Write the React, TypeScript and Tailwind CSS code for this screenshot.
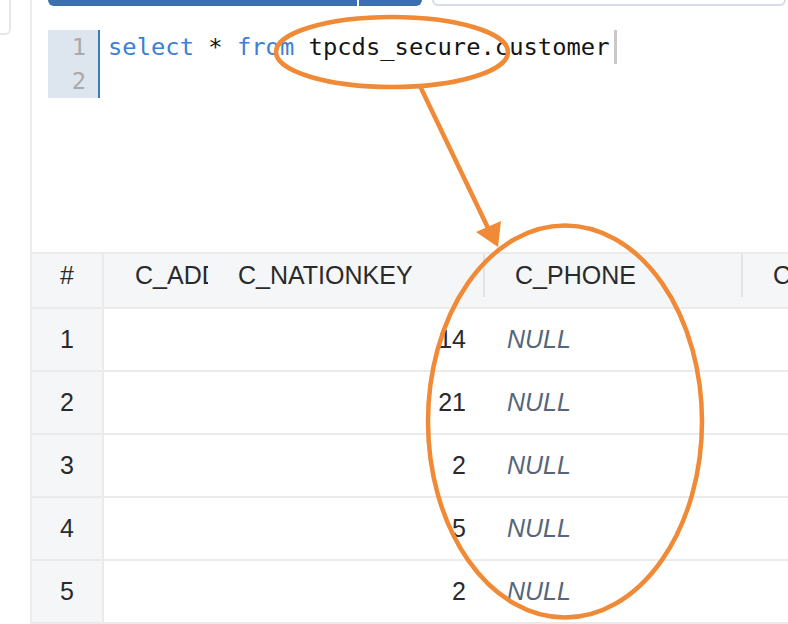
import React from "react";

const rows = [
  { n: 1, key: "14" },
  { n: 2, key: "21" },
  { n: 3, key: "2" },
  { n: 4, key: "5" },
  { n: 5, key: "2" },
];

const Annotations = () => (
  <svg
    className="absolute inset-0 pointer-events-none"
    width={788}
    height={624}
    viewBox="0 0 788 624"
  >
    <ellipse cx={392} cy={52} rx={116} ry={35} fill="none" stroke="#f08a36" strokeWidth={4.5} />
    <line x1={420} y1={86} x2={488} y2={228} stroke="#f08a36" strokeWidth={4.5} />
    <polygon points="498,247 476,232 501,221" fill="#f08a36" />
    <ellipse cx={565} cy={421.5} rx={137} ry={196} fill="none" stroke="#f08a36" strokeWidth={4.5} />
  </svg>
);

export default function App() {
  return (
    <div className="relative w-[788px] h-[624px] overflow-hidden bg-white flex font-['Liberation_Sans',Arial,sans-serif]">
      {/* left strip */}
      <div className="w-[30px] shrink-0">
        <div className="w-[11px] h-[35px] border-r-2 border-b-2 border-[#e6e6e6] rounded-br-[6px]" />
      </div>

      <div className="flex-1 flex flex-col border-l-2 border-[#ececec] min-w-0">
        {/* toolbar */}
        <div className="flex h-[6px] pl-[16px]">
          <div className="w-[309px] h-full bg-[#3b6fae] rounded-bl-[6px]" />
          <div className="w-[2px] h-full bg-white" />
          <div className="w-[63px] h-full bg-[#3b6fae] rounded-br-[6px]" />
          <div className="ml-[10px] w-[354px] h-full border-2 border-t-0 border-[#d6dde7] rounded-b-[6px]" />
        </div>

        {/* editor */}
        <div className="mt-[24px] flex pl-[16px] h-[222px] font-['DejaVu_Sans_Mono',monospace] text-[23.8px]">
          <div className="w-[52px] h-[68px] bg-[#dde6ef] border-r-2 border-[#3b7cb4] flex flex-col items-end pr-[12px] text-[#a9a9a9]">
            <div className="h-[34px] leading-[34px]">1</div>
            <div className="h-[34px] leading-[34px]">2</div>
          </div>
          <div className="pl-[8px] flex flex-col">
            <div className="h-[34px] leading-[34px] flex items-center whitespace-pre text-[#151515]">
              <span className="text-[#3d7fd3]">select</span>
              <span> * </span>
              <span className="text-[#3d7fd3]">from</span>
              <span> tpcds_secure.customer</span>
              <span className="ml-[5px] w-[3px] h-[34px] bg-[#c9c9c9]" />
            </div>
            <div className="h-[34px]" />
          </div>
        </div>

        {/* results grid */}
        <div className="flex flex-col text-[25px] text-[#2a2a2a]">
          <div className="flex h-[57px] bg-[#f5f6f8] border-y-2 border-[#ebebeb]">
            <div className="w-[72px] shrink-0 border-r-2 border-[#ebebeb] h-[53px] flex items-start justify-center">
              <span className="h-[43px] flex items-center">#</span>
            </div>
            <div className="w-[116px] shrink-0 h-[43px] flex items-center pl-[31px] pr-[12px] overflow-hidden whitespace-nowrap">
              <span className="block w-[73px] overflow-hidden">C_ADD</span>
            </div>
            <div className="w-[263px] shrink-0 h-[43px] flex items-center pl-[18px]">C_NATIONKEY</div>
            <div className="w-[2px] shrink-0 h-[43px] bg-[#e3e3e3]" />
            <div className="w-[256px] shrink-0 h-[43px] flex items-center pl-[30px]">C_PHONE</div>
            <div className="w-[2px] shrink-0 h-[43px] bg-[#e3e3e3]" />
            <div className="h-[43px] flex items-center pl-[30px] whitespace-nowrap">C</div>
          </div>
          {rows.map((r) => (
            <div key={r.n} className="flex h-[63px] border-b-2 border-[#ebebeb]">
              <div className="w-[72px] shrink-0 bg-[#f5f6f8] border-r-2 border-[#ebebeb] flex items-center justify-center">
                {r.n}
              </div>
              <div className="w-[116px] shrink-0" />
              <div className="w-[263px] shrink-0 flex items-center justify-end pr-[17px]">{r.key}</div>
              <div className="w-[2px] shrink-0" />
              <div className="flex items-center pl-[22px] italic text-[#55667a]">NULL</div>
            </div>
          ))}
        </div>
      </div>

      <Annotations />
    </div>
  );
}
